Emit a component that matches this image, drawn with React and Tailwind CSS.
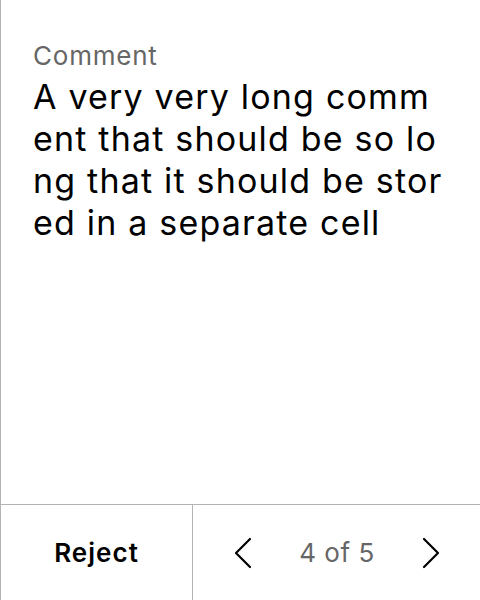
export default function App() {
  return (
    <div className="h-[600px] w-[480px] flex flex-col border-l border-[#b3b3b3] bg-white font-['Inter',sans-serif]">
      <div className="flex-1 px-8 pt-10">
        <p className="text-[26px] leading-[32px] tracking-[0.03em] text-[#666]">Comment</p>
        <p className="mt-[4px] text-[34px] leading-[42px] tracking-[0.035em] text-black break-all">
          A very very long comment that should be so long that it should be stored in a separate cell
        </p>
      </div>
      <div className="h-[96px] flex border-t border-[#b3b3b3]">
        <button type="button" className="w-[192px] flex items-center justify-center border-r border-[#b3b3b3] text-[26px] tracking-[0.04em] font-semibold text-black">
          Reject
        </button>
        <div className="flex-1 flex items-center justify-between pl-10 pr-[39px]">
          <svg width="20" height="32" viewBox="0 0 20 32" fill="none" stroke="black" strokeWidth="2.2" strokeLinecap="round" strokeLinejoin="round">
            <polyline points="17,2 3,16 17,30" />
          </svg>
          <span className="text-[26px] tracking-[0.02em] text-[#666]">4 of 5</span>
          <svg width="20" height="32" viewBox="0 0 20 32" fill="none" stroke="black" strokeWidth="2.2" strokeLinecap="round" strokeLinejoin="round">
            <polyline points="3,2 17,16 3,30" />
          </svg>
        </div>
      </div>
    </div>
  )
}
